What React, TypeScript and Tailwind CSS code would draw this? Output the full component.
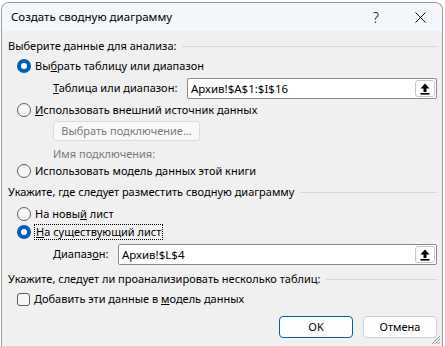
import React from "react";

const font = { fontFamily: '"Noto Sans", "Open Sans", sans-serif' };

function Radio({ checked }: { checked?: boolean }) {
  if (checked) {
    return (
      <span className="flex h-[14px] w-[14px] shrink-0 items-center justify-center rounded-full bg-[#005fb8]">
        <span className="h-[6px] w-[6px] rounded-full bg-white" />
      </span>
    );
  }
  return <span className="h-[14px] w-[14px] shrink-0 rounded-full border border-[#5d5d5d] bg-[#f6f6f6]" />;
}

function Header({ text }: { text: string }) {
  return (
    <div className="flex h-[18px] items-center">
      <span className="whitespace-nowrap">{text}</span>
      <span className="ml-[6px] h-px flex-1 bg-[#d7d7d7]" />
    </div>
  );
}

function UpIcon() {
  return (
    <svg width="10" height="12" viewBox="0 0 10 12">
      <path d="M5 0.5 L9.5 5.5 L6.5 5.5 L6.5 9 L3.5 9 L3.5 5.5 L0.5 5.5 Z" fill="#000" />
      <rect x="0.5" y="10" width="9" height="1.6" fill="#000" />
    </svg>
  );
}

function RangeInput({ value }: { value: string }) {
  return (
    <div className="flex h-[21px] flex-1 items-center rounded-[2px] border border-[#8a8a8a] bg-white pl-[3px] pr-[1px]">
      <span className="flex-1 text-[11.5px]">{value}</span>
      <span className="flex h-[17px] w-[20px] items-center justify-center rounded-[3px] border border-[#c8c8c8] bg-white">
        <UpIcon />
      </span>
    </div>
  );
}

export default function App() {
  return (
    <div className="h-[346px] w-[445px] overflow-hidden bg-white text-[11px] text-black" style={font}>
      <div className="relative ml-[1px] mt-[2px] flex h-[344px] w-[442px] flex-col overflow-hidden rounded-t-[8px] border border-b-0 border-[#9a9a9a] bg-[#f0f0f0]">
        {/* title bar */}
        <div className="flex h-[28px] shrink-0 items-center bg-[#f3f6fb] pl-[9px]">
          <span className="flex-1 text-[11.5px]">Создать сводную диаграмму</span>
          <span className="mr-[36px] text-[14px] font-light">?</span>
          <svg width="11" height="11" viewBox="0 0 11 11" className="mr-[16px]">
            <path d="M0.5 0.5 L10.5 10.5 M10.5 0.5 L0.5 10.5" stroke="#111" strokeWidth="1" />
          </svg>
        </div>

        <div className="flex shrink-0 flex-col pl-[6px] pr-[5px]">
          <div className="mt-[6px]">
            <Header text="Выберите данные для анализа:" />
          </div>
          <div className="mt-[2px] flex h-[18px] items-center gap-[4px] pl-[9px]">
            <Radio checked />
            <span>
              Вы<u>б</u>рать таблицу или диапазон
            </span>
          </div>
          <div className="mt-[3px] flex items-center pl-[45px]">
            <span className="w-[134px] whitespace-nowrap">
              <u>Т</u>аблица или диапазон:
            </span>
            <RangeInput value="Архив!$A$1:$I$16" />
          </div>
          <div className="mt-[2px] flex h-[18px] items-center gap-[4px] pl-[9px]">
            <Radio />
            <span>
              <u>И</u>спользовать внешний источник данных
            </span>
          </div>
          <div className="mt-[2px] pl-[45px]">
            <div className="flex h-[20px] w-[147px] items-center justify-center rounded-[3px] border border-[#dcdcdc] bg-[#f8f8f8] text-[#7a7a7a]">
              Выбрать подключение...
            </div>
          </div>
          <div className="mt-[5px] flex h-[16px] items-center pl-[45px] text-[#7a7a7a]">Имя подключения:</div>
          <div className="flex h-[18px] items-center gap-[4px] pl-[9px]">
            <Radio />
            <span>
              Использовать модель <u>д</u>анных этой книги
            </span>
          </div>
          <div className="mt-[3px]">
            <Header text="Укажите, где следует разместить сводную диаграмму" />
          </div>
          <div className="mt-[4px] flex h-[18px] items-center gap-[4px] pl-[9px]">
            <Radio />
            <span>
              На новы<u>й</u> лист
            </span>
          </div>
          <div className="flex h-[18px] items-center gap-[3px] pl-[9px]">
            <Radio checked />
            <span className="border border-dotted border-black px-[1px] leading-[14px]">
              <u>Н</u>а существующий лист
            </span>
          </div>
          <div className="mt-[3px] flex items-center pl-[45px]">
            <span className="w-[65px]">
              Диапаз<u>о</u>н:
            </span>
            <RangeInput value="Архив!$L$4" />
          </div>
          <div className="mt-[5px]">
            <Header text="Укажите, следует ли проанализировать несколько таблиц:" />
          </div>
          <div className="mt-[2px] flex h-[18px] items-center gap-[4px] pl-[9px]">
            <span className="h-[13px] w-[13px] shrink-0 rounded-[3px] border border-[#5d5d5d] bg-[#f6f6f6]" />
            <span>
              Добавить эти данные в <u>м</u>одель данных
            </span>
          </div>
          <div className="mt-[8px] flex justify-end gap-[10px]">
            <button className="flex h-[22px] w-[74px] items-center justify-center rounded-[4px] border border-[#005fb8] bg-[#fdfdfd]">
              OK
            </button>
            <button className="flex h-[22px] w-[74px] items-center justify-center rounded-[4px] border border-[#d0d0d0] bg-[#fdfdfd]">
              Отмена
            </button>
          </div>
        </div>

        {/* size grip */}
        <svg width="10" height="10" viewBox="0 0 10 10" className="absolute bottom-[1px] right-[1px]">
          <path d="M9 1 L1 9 M9 4 L4 9 M9 7 L7 9" stroke="#9a9a9a" strokeWidth="1" />
        </svg>
      </div>
    </div>
  );
}
